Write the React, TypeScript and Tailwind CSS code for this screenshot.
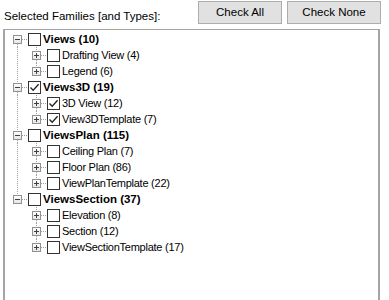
import React from "react";

type TreeNode = { label: string; checked?: boolean; children?: TreeNode[] };

const TREE: TreeNode[] = [
  {
    label: "Views (10)",
    children: [{ label: "Drafting View (4)" }, { label: "Legend (6)" }],
  },
  {
    label: "Views3D (19)",
    checked: true,
    children: [
      { label: "3D View (12)", checked: true },
      { label: "View3DTemplate (7)", checked: true },
    ],
  },
  {
    label: "ViewsPlan (115)",
    children: [
      { label: "Ceiling Plan (7)" },
      { label: "Floor Plan (86)" },
      { label: "ViewPlanTemplate (22)" },
    ],
  },
  {
    label: "ViewsSection (37)",
    children: [
      { label: "Elevation (8)" },
      { label: "Section (12)" },
      { label: "ViewSectionTemplate (17)" },
    ],
  },
];

type Row = {
  key: string;
  label: string;
  checked: boolean;
  bold: boolean;
  guides: boolean[];
  up: boolean;
  down: boolean;
  expanded: boolean;
};

function flatten(): Row[] {
  const rows: Row[] = [];
  TREE.forEach((root, i) => {
    const rootHasNext = i < TREE.length - 1;
    rows.push({
      key: root.label,
      label: root.label,
      checked: !!root.checked,
      bold: true,
      guides: [],
      up: i > 0,
      down: rootHasNext,
      expanded: true,
    });
    const kids = root.children ?? [];
    kids.forEach((c, j) => {
      rows.push({
        key: root.label + c.label,
        label: c.label,
        checked: !!c.checked,
        bold: false,
        guides: [rootHasNext],
        up: true,
        down: j < kids.length - 1,
        expanded: false,
      });
    });
  });
  return rows;
}

const LINE = "#a0a0a0";

function Guide({ on }: { on: boolean }) {
  return (
    <svg width="19" height="16" className="shrink-0">
      {on && (
        <line x1="9.5" y1="0" x2="9.5" y2="16" stroke={LINE} strokeDasharray="1 1" />
      )}
    </svg>
  );
}

function Expander({ up, down, expanded }: { up: boolean; down: boolean; expanded: boolean }) {
  return (
    <svg width="20" height="16" className="shrink-0">
      {up && <line x1="9.5" y1="0" x2="9.5" y2="4" stroke={LINE} strokeDasharray="1 1" />}
      {down && <line x1="9.5" y1="13" x2="9.5" y2="16" stroke={LINE} strokeDasharray="1 1" />}
      <line x1="14" y1="8.5" x2="20" y2="8.5" stroke={LINE} strokeDasharray="1 1" />
      <defs>
        <linearGradient id="exp" x1="0" y1="0" x2="0" y2="1">
          <stop offset="0" stopColor="#ffffff" />
          <stop offset="1" stopColor="#e4e4e4" />
        </linearGradient>
      </defs>
      <rect x="5.5" y="4.5" width="8" height="8" fill="url(#exp)" stroke="#919191" />
      <line x1="7" y1="8.5" x2="12" y2="8.5" stroke="#404040" />
      {!expanded && <line x1="9.5" y1="6" x2="9.5" y2="11" stroke="#404040" />}
    </svg>
  );
}

function CheckBox({ checked }: { checked: boolean }) {
  return (
    <span className="flex h-[13px] w-[13px] shrink-0 items-center justify-center border border-[#333333] bg-white">
      {checked && (
        <svg width="11" height="11" viewBox="0 0 11 11">
          <path d="M1.5 5.5 L4.2 8.3 L9.6 2.2" fill="none" stroke="#222222" strokeWidth="1.3" />
        </svg>
      )}
    </span>
  );
}

export default function App() {
  const rows = flatten();
  return (
    <div
      className="h-[300px] w-[389px] overflow-hidden bg-white text-black"
      style={{ fontFamily: '"Liberation Sans", Arial, sans-serif' }}
    >
      <div className="flex items-start">
        <span className="ml-[4px] mt-[9px] text-[11.5px] leading-[14px]">
          Selected Families [and Types]:
        </span>
        <button
          type="button"
          className="ml-auto mt-[1px] h-[23px] w-[84px] border border-[#adadad] bg-[#e1e1e1] text-[11.5px] leading-none"
        >
          Check All
        </button>
        <button
          type="button"
          className="ml-[5px] mr-[8px] mt-[1px] h-[23px] w-[94px] border border-[#adadad] bg-[#e1e1e1] text-[11.5px] leading-none"
        >
          Check None
        </button>
      </div>

      <div className="ml-[3px] mt-[5px] h-[290px] w-[377px] border-x-2 border-t border-[#a5a5a5] bg-white pl-[3px] pt-[1px]">
        {rows.map((r) => (
          <div key={r.key} className="flex h-[16px] items-center">
            {r.guides.map((g, i) => (
              <Guide key={i} on={g} />
            ))}
            <Expander up={r.up} down={r.down} expanded={r.expanded} />
            <CheckBox checked={r.checked} />
            <span
              className={
                r.bold
                  ? "ml-[2px] whitespace-nowrap text-[11.5px] font-bold leading-[16px]"
                  : "ml-[2px] whitespace-nowrap text-[11px] leading-[16px] tracking-[-0.25px]"
              }
            >
              {r.label}
            </span>
          </div>
        ))}
      </div>
    </div>
  );
}
